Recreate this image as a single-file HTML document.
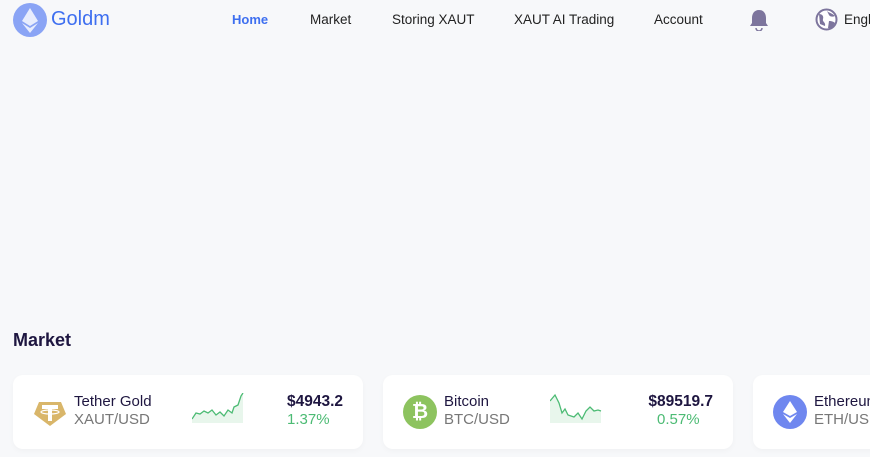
<!DOCTYPE html>
<html><head><meta charset="utf-8"><style>
*{margin:0;padding:0;box-sizing:border-box}
body{width:870px;height:457px;overflow:hidden;background:#f7f8fa;font-family:"Liberation Sans",sans-serif;position:relative}
.logo{position:absolute;left:13px;top:3px;width:34px;height:34px;border-radius:50%;background:#8aa4f5}
.brand{position:absolute;left:51px;top:8px;font-size:20px;color:#3e6ff0}
.nav{position:absolute;top:12px;font-size:13.5px;color:#222}
.card{position:absolute;top:375px;width:350px;height:74px;background:#fff;border-radius:10px;box-shadow:0 2px 6px rgba(0,0,0,.03)}
.ic{position:absolute;left:20px;top:20px;width:34px;height:34px;border-radius:50%}
.nm{position:absolute;left:61px;top:18px;font-size:15px;color:#1e1640}
.pr{position:absolute;left:61px;top:36px;font-size:15px;color:#777}
.px{position:absolute;right:20px;top:18px;font-size:15.5px;font-weight:bold;color:#1e1640}
.pc{position:absolute;left:274px;top:36px;font-size:15px;color:#4cbb74}
</style></head><body>
<div class="logo"><svg width="34" height="34" viewBox="0 0 34 34"><polygon points="17,5 25,18 17,23 9,18" fill="#fff" opacity=".8"/><polygon points="17,25 25,20 17,30 9,20" fill="#fff" opacity=".8"/></svg></div>
<div class="brand">Goldm</div>
<div class="nav" style="left:232px;color:#3e6ff0;font-weight:bold;font-size:13px">Home</div>
<div class="nav" style="left:310px">Market</div>
<div class="nav" style="left:392px">Storing XAUT</div>
<div class="nav" style="left:514px">XAUT AI Trading</div>
<div class="nav" style="left:654px">Account</div>
<svg style="position:absolute;left:748px;top:9px" width="22" height="22" viewBox="0 0 22 22"><path d="M11 1C6 1 4 5 4 9v5l-2 3h18l-2-3V9c0-4-2-8-7-8z" fill="#7d759d"/><path d="M8 19a3 3 0 0 0 6 0" stroke="#7d759d" stroke-width="1.5" fill="none"/></svg>
<svg style="position:absolute;left:815px;top:8px" width="23" height="23" viewBox="0 0 23 23"><circle cx="11.5" cy="11.5" r="10" fill="#fff" stroke="#7d759d" stroke-width="2"/><path d="M4 6c3 0 5 2 4 5s3 3 2 7l-5-2z M12 3c2 2 5 2 8 5-2 1-5 1-6-1z M14 13c3 0 5 1 6 2-2 4-5 6-7 5z" fill="#7d759d"/></svg>
<div class="nav" style="left:844px">English</div>
<div style="position:absolute;left:13px;top:330px;font-size:18px;font-weight:bold;color:#1e1640">Market</div>

<div class="card" style="left:13px">
<svg class="ic" viewBox="0 0 34 34" style="border-radius:0"><polygon points="6,7 28,7 33,19 17,31 1,19" fill="#d9b66a"/><rect x="9" y="10" width="16" height="4" fill="#fff"/><rect x="15" y="10" width="4" height="16" fill="#fff"/><ellipse cx="17" cy="17" rx="9" ry="2" fill="none" stroke="#fff" stroke-width="1.2"/></svg>
<div class="nm">Tether Gold</div><div class="pr">XAUT/USD</div>
<svg style="position:absolute;left:179px;top:18px" width="52" height="30"><path d="M0 26 L4 20 L8 21 L12 18 L16 20 L20 17 L24 22 L28 19 L32 23 L36 17 L40 20 L42 14 L46 12 L49 3 L51 0 L51 30 L0 30z" fill="#e8f6ec" stroke="none"/><path d="M0 26 L4 20 L8 21 L12 18 L16 20 L20 17 L24 22 L28 19 L32 23 L36 17 L40 20 L42 14 L46 12 L49 3 L51 0" fill="none" stroke="#4cbb74" stroke-width="1.3"/></svg>
<div class="px">$4943.2</div><div class="pc">1.37%</div></div>

<div class="card" style="left:383px">
<div class="ic" style="background:#8dc35f;color:#fff;font-weight:bold;font-size:20px;text-align:center;line-height:34px">₿</div>
<div class="nm">Bitcoin</div><div class="pr">BTC/USD</div>
<svg style="position:absolute;left:167px;top:18px" width="52" height="30"><path d="M0 8 L5 2 L9 10 L12 20 L15 16 L18 22 L24 24 L28 20 L32 26 L36 18 L40 14 L44 18 L48 17 L51 18 L51 30 L0 30z" fill="#e8f6ec"/><path d="M0 8 L5 2 L9 10 L12 20 L15 16 L18 22 L24 24 L28 20 L32 26 L36 18 L40 14 L44 18 L48 17 L51 18" fill="none" stroke="#4cbb74" stroke-width="1.3"/></svg>
<div class="px">$89519.7</div><div class="pc">0.57%</div></div>

<div class="card" style="left:753px">
<div class="ic" style="background:#6f87ef"><svg width="34" height="34" viewBox="0 0 34 34"><polygon points="17,6 24,17 17,21 10,17" fill="#fff"/><polygon points="17,23 24,19 17,28 10,19" fill="#fff"/></svg></div>
<div class="nm">Ethereum</div><div class="pr">ETH/USD</div></div>
</body></html>
